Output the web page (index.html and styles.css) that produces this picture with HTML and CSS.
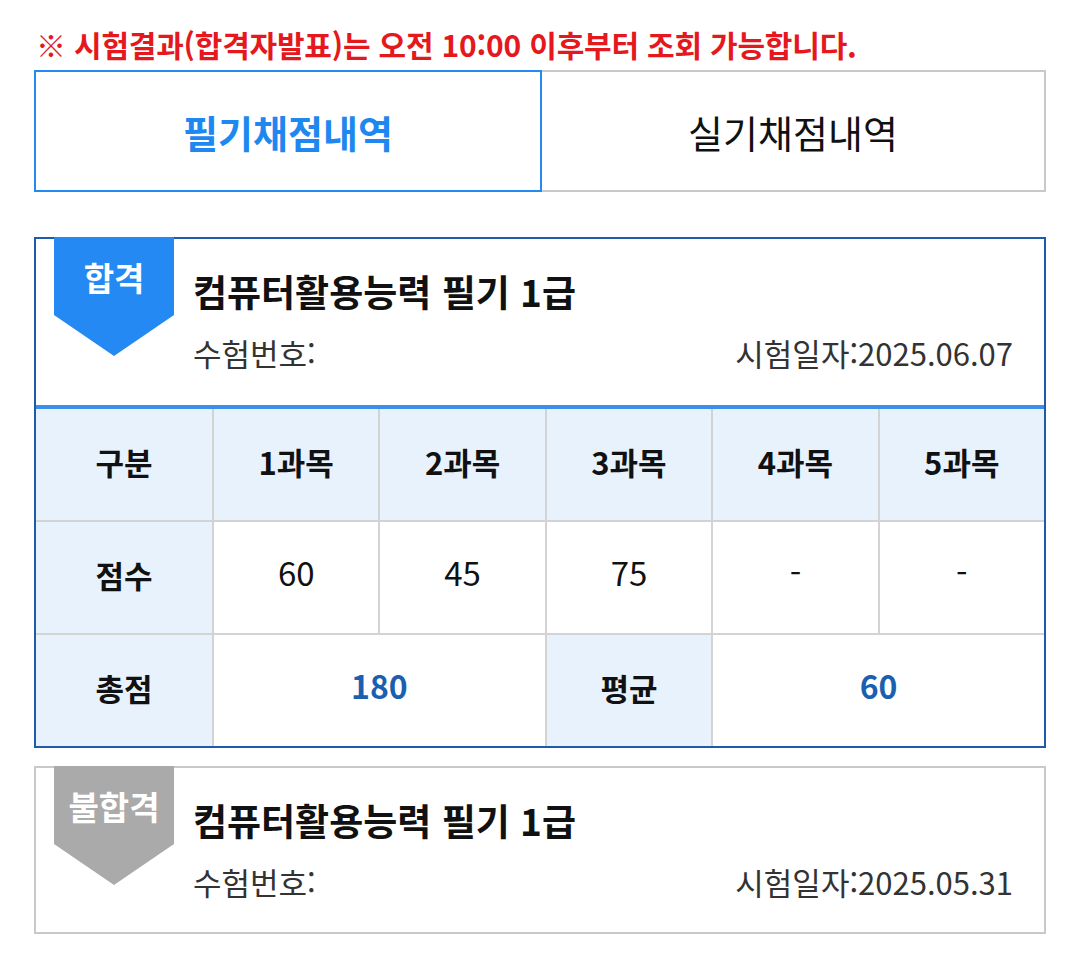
FILE: index.html
```html
<!DOCTYPE html>
<html lang="ko">

<head>
    <meta charset="UTF-8" />
    <meta name="viewport" content="width=device-width, initial-scale=1" />
    <title>채점내역 조회</title>
    <link rel="stylesheet" href="styles.css">
</head>

<body>
    <div class="page">

        <p class="notice">※ 시험결과(합격자발표)는 오전 10:00 이후부터 조회 가능합니다.</p>

        <div class="tabs">
            <div class="tab active">필기채점내역</div>
            <div class="tab">실기채점내역</div>
        </div>

        <!-- 합격 -->
        <div class="result pass">
            <div class="result-head">
                <span class="badge">합격</span>
                <h3 class="result-title">컴퓨터활용능력 필기 1급</h3>
                <div class="result-meta">
                    <span>수험번호:</span>
                    <span>시험일자:2025.06.07</span>
                </div>
            </div>

            <div class="score-grid">
                <div class="cell th">구분</div>
                <div class="cell th">1과목</div>
                <div class="cell th">2과목</div>
                <div class="cell th">3과목</div>
                <div class="cell th">4과목</div>
                <div class="cell th">5과목</div>

                <div class="cell th">점수</div>
                <div class="cell num">60</div>
                <div class="cell num">45</div>
                <div class="cell num">75</div>
                <div class="cell num">-</div>
                <div class="cell num">-</div>

                <div class="cell th">총점</div>
                <div class="cell num total span2">180</div>
                <div class="cell th">평균</div>
                <div class="cell num total span2">60</div>
            </div>
        </div>

        <!-- 불합격 -->
        <div class="result fail">
            <div class="result-head">
                <span class="badge">불합격</span>
                <h3 class="result-title">컴퓨터활용능력 필기 1급</h3>
                <div class="result-meta">
                    <span>수험번호:</span>
                    <span>시험일자:2025.05.31</span>
                </div>
            </div>
        </div>

    </div>
</body>

</html>
```

FILE: styles.css
```css
:root {
    --red: #e4181d;
    --blue: #2489f3;
    --navy: #1f5ba8;
    --line-blue: #3b8fe8;
    --cell-line: #d3d3d3;
    --head-bg: #e8f2fd;
    --gray-line: #c9c9c9;
}

body {
    margin: 0;
    background: #fff;
    color: #111;
    font-family: "Noto Sans CJK KR", "Noto Sans", sans-serif;
}

.page {
    padding: 26px 34px 24px;
}

.notice {
    margin: 0 0 8px 2px;
    color: var(--red);
    font-size: 30px;
    font-weight: 700;
    line-height: 36px;
    letter-spacing: -0.2px;
}

/* tabs */
.tabs {
    display: grid;
    grid-template-columns: 508px 1fr;
    height: 122px;
    margin-bottom: 45px;
}

.tab {
    display: flex;
    align-items: center;
    justify-content: center;
    border: 2px solid var(--gray-line);
    border-left: none;
    font-size: 38px;
    color: #111;
}

.tab.active {
    border: 2px solid var(--blue);
    color: #1e88f0;
    font-weight: 700;
}

/* result cards */
.result {
    border: 2px solid var(--gray-line);
    margin-bottom: 18px;
}

.result.pass {
    border-color: var(--navy);
}

.result-head {
    position: relative;
    padding: 30px 31px 32px 157px;
}

.fail .result-head {
    padding-bottom: 30px;
}

.badge {
    position: absolute;
    top: -2px;
    left: 18px;
    width: 120px;
    height: 119px;
    padding-top: 18px;
    box-sizing: border-box;
    clip-path: polygon(0 0, 100% 0, 100% 65.5%, 50% 100%, 0 65.5%);
    background: var(--blue);
    color: #fff;
    font-size: 33px;
    font-weight: 700;
    text-align: center;
    line-height: 44px;
}

.fail .badge {
    background: #aaaaaa;
}

.result-title {
    margin: 0;
    font-size: 37px;
    font-weight: 700;
    line-height: 44px;
}

.result-meta {
    display: flex;
    justify-content: space-between;
    margin-top: 20px;
    font-size: 31px;
    line-height: 40px;
    color: #333;
}

/* score table */
.score-grid {
    display: grid;
    grid-template-columns: 176px repeat(5, 1fr);
    grid-auto-rows: 111px;
    gap: 2px;
    background: var(--cell-line);
    border-top: 4px solid var(--line-blue);
}

.cell {
    display: flex;
    align-items: center;
    justify-content: center;
    padding-bottom: 6px;
    background: #fff;
    font-size: 33px;
    color: #111;
}

.cell.num {
    padding-bottom: 12px;
}

.cell.th {
    background: var(--head-bg);
    font-size: 31px;
    font-weight: 700;
}

.cell.span2 {
    grid-column: span 2;
}

.cell.total {
    color: #1a5fb0;
    font-size: 32px;
    font-weight: 700;
}
```
